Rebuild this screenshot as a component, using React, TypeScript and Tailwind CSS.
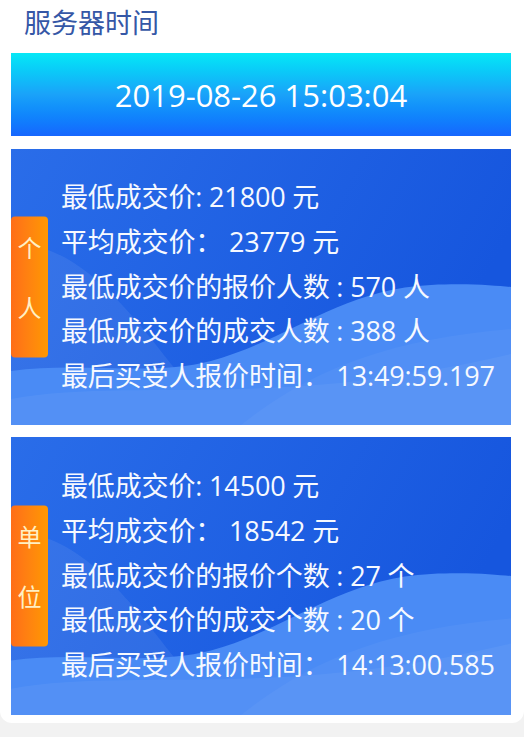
const font = "font-['Open_Sans','Noto_Sans_CJK_SC',sans-serif]";

interface CardProps {
  tag: [string, string];
  lines: string[];
  height: string;
}

const WaveBg = () => (
  <svg className="absolute inset-0 w-full h-full" viewBox="0 0 500 276" preserveAspectRatio="none">
    <defs>
      <linearGradient id="base" x1="0" y1="0" x2="1" y2="0.3">
        <stop offset="0" stopColor="#2a6de9" />
        <stop offset="1" stopColor="#1656de" />
      </linearGradient>
    </defs>
    <rect width="500" height="276" fill="url(#base)" />
    <path d="M0,95 C60,92 110,150 160,215 C185,245 200,262 215,276 L0,276 Z" fill="#ffffff" opacity="0.07" />
    <path d="M0,222 C70,212 140,228 200,212 C280,190 330,140 420,136 C460,134 485,137 500,138 L500,276 L0,276 Z" fill="#4a8bf5" />
    <path d="M0,250 C120,228 260,262 500,205 L500,276 L0,276 Z" fill="#ffffff" opacity="0.05" />
    <path d="M230,276 C300,220 380,190 500,180 L500,276 Z" fill="#ffffff" opacity="0.04" />
  </svg>
);

const InfoCard = ({ tag, lines, height }: CardProps) => {
  return (
    <div className={`relative overflow-hidden ${height}`}>
      <WaveBg />
      <div className="absolute left-0 top-1/2 -translate-y-1/2 w-[37px] h-[141px] rounded-[4px] bg-gradient-to-r from-[#ff6d18] to-[#ff9800] flex flex-col items-center justify-center gap-[36px] pb-[20px] text-[#fff0c4] text-[24px] leading-[24px]">
        <span>{tag[0]}</span>
        <span>{tag[1]}</span>
      </div>
      <div className="relative h-full flex flex-col justify-center pl-[50px] text-[27px] leading-[44.75px] tracking-[-0.15px] text-[#f6f9ff] whitespace-pre">
        {lines.map((l, i) => (
          <div key={i}>{l}</div>
        ))}
      </div>
    </div>
  );
};

export default function App() {
  return (
    <div className={`min-h-screen bg-[#f2f2f2] ${font}`}>
      <div className="bg-white rounded-b-[12px] pl-[11px] pr-[13px] pb-[8px]">
        <div className="h-[46px] leading-[46px] pl-[13px] text-[27px] text-[#3557a6]">服务器时间</div>
        <div className="mt-[7px] h-[83px] bg-gradient-to-b from-[#08e8f6] via-[#1aa2f9] to-[#1766fe] flex items-center justify-center text-white text-[31px] pt-[2px]">
          2019-08-26 15:03:04
        </div>
        <div className="mt-[13px]">
          <InfoCard
            tag={["个", "人"]}
            height="h-[276px]"
            lines={[
              "最低成交价: 21800 元",
              "平均成交价： 23779 元",
              "最低成交价的报价人数 : 570 人",
              "最低成交价的成交人数 : 388 人",
              "最后买受人报价时间： 13:49:59.197",
            ]}
          />
        </div>
        <div className="mt-[12px]">
          <InfoCard
            tag={["单", "位"]}
            height="h-[278px]"
            lines={[
              "最低成交价: 14500 元",
              "平均成交价： 18542 元",
              "最低成交价的报价个数 : 27 个",
              "最低成交价的成交个数 : 20 个",
              "最后买受人报价时间： 14:13:00.585",
            ]}
          />
        </div>
      </div>
    </div>
  );
}
